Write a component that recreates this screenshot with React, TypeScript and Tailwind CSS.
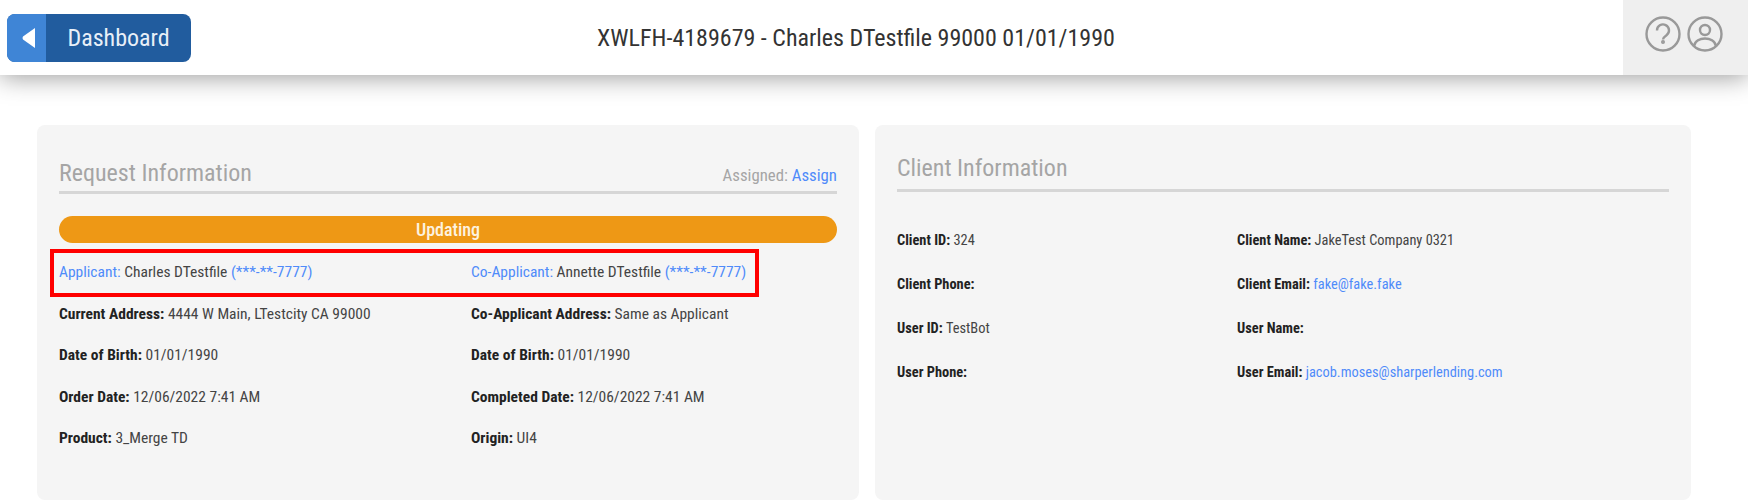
import React from "react";

const Row = ({ label, children }: { label?: string; children?: React.ReactNode }) => (
  <div className="leading-[20px] text-[#444]">
    {label && <span className="font-bold text-[#222]">{label} </span>}
    {children}
  </div>
);

const Blue = ({ children }: { children: React.ReactNode }) => <span className="text-[#4f8bfa]">{children}</span>;

export default function App() {
  return (
    <div className="h-[503px] w-[1748px] overflow-hidden bg-white font-['Roboto',sans-serif] [font-stretch:75%]">
      <header className="relative flex h-[75px] items-stretch bg-white shadow-[0_2px_24px_rgba(0,0,0,0.4)]">
        <div className="flex flex-1 items-center pl-[7px] pt-[1px]">
          <button className="flex h-[48px] w-[184px] overflow-hidden rounded-[8px] bg-[#215c9e] text-[24px] text-[#e8eff8]">
            <span className="flex h-full w-[39px] items-center justify-center bg-[#3f85d6] pl-[4px]">
              <svg width="14" height="20" viewBox="0 0 14 20"><path d="M13 0 L1 8.500 Q0 10 1 11.500 L13 20 Z" fill="#fff" /></svg>
            </span>
            <span className="flex flex-1 items-center justify-center">Dashboard</span>
          </button>
          <h1 className="flex-1 pr-[102px] text-center text-[24px] text-[#333]">XWLFH-4189679 - Charles DTestfile 99000 01/01/1990</h1>
        </div>
        <div className="flex w-[125px] items-center gap-[6px] bg-[#efefef] pb-[8px] pl-[21px]">
          <svg width="36" height="36" viewBox="0 0 36 36" fill="none" stroke="#999" strokeWidth="2.400" className="translate-x-[1px]">
            <circle cx="18" cy="18" r="16.500" />
            <path d="M12 14.500a6 6 0 1 1 9.500 4.800c-2 1.400-3.500 2.200-3.500 4.200" />
            <circle cx="18" cy="26" r="0.800" fill="#999" />
          </svg>
          <svg width="36" height="36" viewBox="0 0 36 36" fill="none" stroke="#999" strokeWidth="2.400" className="translate-x-[1px]">
            <circle cx="18" cy="18" r="16.500" />
            <circle cx="18" cy="14" r="5" />
            <path d="M7 30c1-5 6-7.500 11-7.500s10 2.500 11 7.500" />
          </svg>
        </div>
      </header>

      <main className="flex gap-[16px] pl-[37px] pt-[50px]">
        <section className="h-[375px] w-[822px] rounded-[8px] bg-[#f5f5f5] px-[22px] pt-[33px]">
          <div className="flex h-[36px] items-center justify-between border-b-[3px] border-[#d6d6d6] pb-[3px]">
            <h2 className="text-[24px] text-[#a5a5a5]">Request Information</h2>
            <span className="pt-[6px] text-[16.800px] text-[#a5a5a5]">Assigned: <Blue>Assign</Blue></span>
          </div>
          <div className="mt-[22px] flex h-[27px] items-center justify-center rounded-full bg-[#ee9815] pb-[1px] text-[18px] font-medium text-[#fdf3e0]">Updating</div>
          <div className="relative mt-[19px] grid auto-rows-[41.500px] grid-cols-[412px_1fr] text-[15.500px]">
            <div className="absolute -left-[9px] -top-[13px] h-[48px] w-[709px] border-[4px] border-[#f00]" />
            <Row><Blue>Applicant:</Blue> Charles DTestfile <Blue>(***-**-7777)</Blue></Row>
            <Row><Blue>Co-Applicant:</Blue> Annette DTestfile <Blue>(***-**-7777)</Blue></Row>
            <Row label="Current Address:">4444 W Main, LTestcity CA 99000</Row>
            <Row label="Co-Applicant Address:">Same as Applicant</Row>
            <Row label="Date of Birth:">01/01/1990</Row>
            <Row label="Date of Birth:">01/01/1990</Row>
            <Row label="Order Date:">12/06/2022 7:41 AM</Row>
            <Row label="Completed Date:">12/06/2022 7:41 AM</Row>
            <Row label="Product:">3_Merge TD</Row>
            <Row label="Origin:">UI4</Row>
          </div>
        </section>

        <section className="h-[375px] w-[816px] rounded-[8px] bg-[#f5f5f5] px-[22px] pt-[25px]">
          <div className="h-[42px] border-b-[3px] border-[#d6d6d6]">
            <h2 className="text-[24px] text-[#a5a5a5]">Client Information</h2>
          </div>
          <div className="mt-[39px] grid auto-rows-[44px] grid-cols-[340px_1fr] text-[14.400px]">
            <Row label="Client ID:">324</Row>
            <Row label="Client Name:">JakeTest Company 0321</Row>
            <Row label="Client Phone:" />
            <Row label="Client Email:"><Blue>fake@fake.fake</Blue></Row>
            <Row label="User ID:">TestBot</Row>
            <Row label="User Name:" />
            <Row label="User Phone:" />
            <Row label="User Email:"><Blue>jacob.moses@sharperlending.com</Blue></Row>
          </div>
        </section>
      </main>
    </div>
  );
}
